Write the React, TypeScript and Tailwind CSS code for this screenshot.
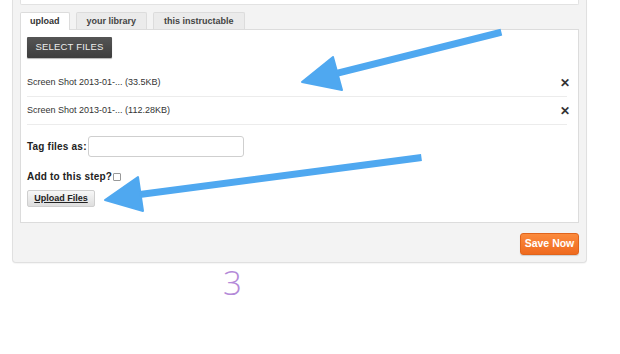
import React from 'react'

const files = [
  { name: 'Screen Shot 2013-01-...', size: '(33.5KB)' },
  { name: 'Screen Shot 2013-01-...', size: '(112.28KB)' },
]

const tabs = ['upload', 'your library', 'this instructable']

function Arrows() {
  return (
    <svg className="absolute left-0 top-0 pointer-events-none" width="620" height="354" viewBox="0 0 620 354">
      <g fill="#4fa8f0" stroke="#4fa8f0" strokeLinejoin="round">
        <line x1="498" y1="33" x2="322" y2="77" strokeWidth="7" strokeLinecap="square" />
        <polygon points="302,82 333,57 342,90" strokeWidth="2" />
        <line x1="418" y1="158" x2="128" y2="196" strokeWidth="7" strokeLinecap="square" />
        <polygon points="105,200 138,177 143,211" strokeWidth="2" />
      </g>
    </svg>
  )
}

export default function App() {
  return (
    <div className="relative w-[620px] h-[354px] bg-white overflow-hidden" style={{ fontFamily: '"Liberation Sans", Arial, sans-serif' }}>
      <div className="ml-[12px] w-[575px] bg-[#f3f3f3] border-x border-b border-[#e0e0e0] rounded-b-[4px] px-[7px] pb-[7px] shadow-[0_1px_1px_rgba(0,0,0,0.04)]">
        {/* bottom of previous field */}
        <div className="h-[5px] bg-white border-x border-b border-[#e2e2e2] rounded-b-[2px]" />

        {/* tabs */}
        <div className="flex gap-[6px] mt-[7px] h-[17px] relative z-10">
          {tabs.map((t, i) => (
            <div
              key={t}
              className={
                i === 0
                  ? 'h-[18px] px-[9px] bg-white border-x border-t border-[#dcdcdc] rounded-t-[2px] text-[9px] font-bold text-[#333] leading-[17px]'
                  : 'h-[17px] px-[10px] bg-[#ebebeb] border-x border-t border-[#dcdcdc] rounded-t-[2px] text-[9px] font-bold text-[#444] leading-[17px]'
              }
            >
              {t}
            </div>
          ))}
        </div>

        {/* content */}
        <div className="bg-white border border-[#dcdcdc] h-[194px] px-[6px] pt-[7px]">
          <button className="block h-[21px] w-[85px] bg-gradient-to-b from-[#555] to-[#3d3d3d] text-[#eee] text-[9.5px] uppercase tracking-[0.2px] rounded-[1px] shadow-[0_1px_1px_rgba(0,0,0,0.3)]">
            Select Files
          </button>

          <div className="mt-[11px] mr-[5px]">
            {files.map((f, i) => (
              <div key={i} className="flex items-center justify-between h-[28px] border-b border-[#ececec]">
                <span className="text-[9px] text-[#333]">
                  {f.name} {f.size}
                </span>
                <span className="text-[12px] font-bold text-[#333] mr-[-3px] leading-none">✕</span>
              </div>
            ))}
          </div>

          <div className="flex items-center mt-[11px]">
            <span className="text-[10px] font-bold text-[#222] tracking-[0.2px]">Tag files as:</span>
            <input className="ml-[1px] w-[156px] h-[21px] border border-[#cfcfcf] rounded-[3px] bg-white" />
          </div>

          <div className="flex items-center mt-[12px]">
            <span className="text-[10px] font-bold text-[#222] tracking-[0.2px]">Add to this step?</span>
            <span className="ml-[1px] w-[8px] h-[8px] border border-[#999] rounded-[1px] bg-white" />
          </div>

          <button className="block mt-[6px] h-[17px] w-[68px] bg-gradient-to-b from-[#f7f7f7] to-[#dedede] border border-[#cfcfcf] rounded-[2px] text-[9px] font-bold text-[#222] underline">
            Upload Files
          </button>
        </div>

        <div className="flex justify-end mt-[10px]">
          <button className="h-[22px] w-[59px] bg-gradient-to-b from-[#fb8a3c] to-[#ef6a1e] border border-[#e0641c] rounded-[3px] text-[10.5px] font-bold text-white shadow-[0_1px_1px_rgba(0,0,0,0.15)]">
            Save Now
          </button>
        </div>
      </div>

      <div className="ml-[223px] mt-[2px] text-[33px] font-light text-[#b48ad8] leading-[36px]" style={{ fontFamily: '"Open Sans", sans-serif' }}>
        3
      </div>

      <Arrows />
    </div>
  )
}
